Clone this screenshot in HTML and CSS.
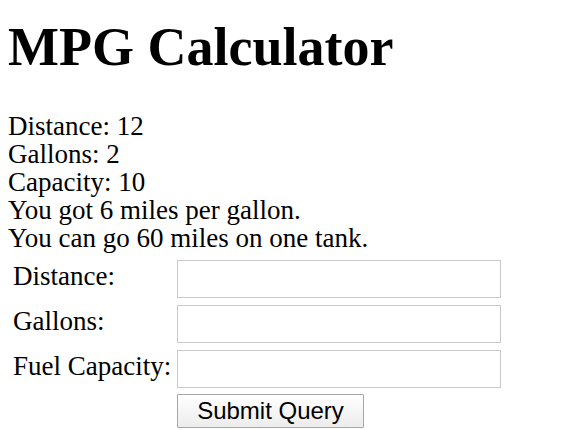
FILE: index.html
```html
<!DOCTYPE html>
<html>
<head>
<meta charset="utf-8">
<title>MPG Calculator</title>
<link rel="stylesheet" href="styles.css">
</head>
<body>
<h1 class="title">MPG Calculator</h1>
<div class="results">
  <div>Distance: 12</div>
  <div>Gallons: 2</div>
  <div>Capacity: 10</div>
  <div>You got 6 miles per gallon.</div>
  <div>You can go 60 miles on one tank.</div>
</div>
<form class="calc">
  <label class="lbl" for="d">Distance:</label>
  <input class="field" id="d" type="text">
  <label class="lbl" for="g">Gallons:</label>
  <input class="field" id="g" type="text">
  <label class="lbl" for="c">Fuel Capacity:</label>
  <input class="field" id="c" type="text">
  <span></span>
  <button class="submit" type="button">Submit Query</button>
</form>
</body>
</html>
```
FILE: styles.css
```css
html, body {
  margin: 0;
  padding: 0;
  background: #fff;
}
body {
  padding: 0 8px;
  font-family: "Liberation Serif", "Times New Roman", serif;
  font-size: 27px;
  color: #000;
}
.title {
  font-size: 54px;
  font-weight: bold;
  line-height: 60px;
  margin: 17px 0 35px 0;
}
.results {
  line-height: 28px;
}
.calc {
  display: grid;
  grid-template-columns: 164px 324px;
  row-gap: 7px;
  align-items: center;
  padding: 8px 0 0 5px;
}
.lbl {
  line-height: 28px;
  margin-bottom: 6px;
}
.field {
  box-sizing: border-box;
  width: 324px;
  height: 38px;
  margin: 0;
  border: 1px solid #c9c9c9;
  background: #fff;
  font-size: 24px;
}
.submit {
  box-sizing: border-box;
  width: 187px;
  height: 34px;
  margin: -1px 0 0 0;
  padding: 0;
  border: 1px solid #a6a6a6;
  border-radius: 1px;
  background: linear-gradient(#ffffff, #ececec);
  font-family: "Liberation Sans", Arial, sans-serif;
  font-size: 24px;
  color: #000;
}
```
